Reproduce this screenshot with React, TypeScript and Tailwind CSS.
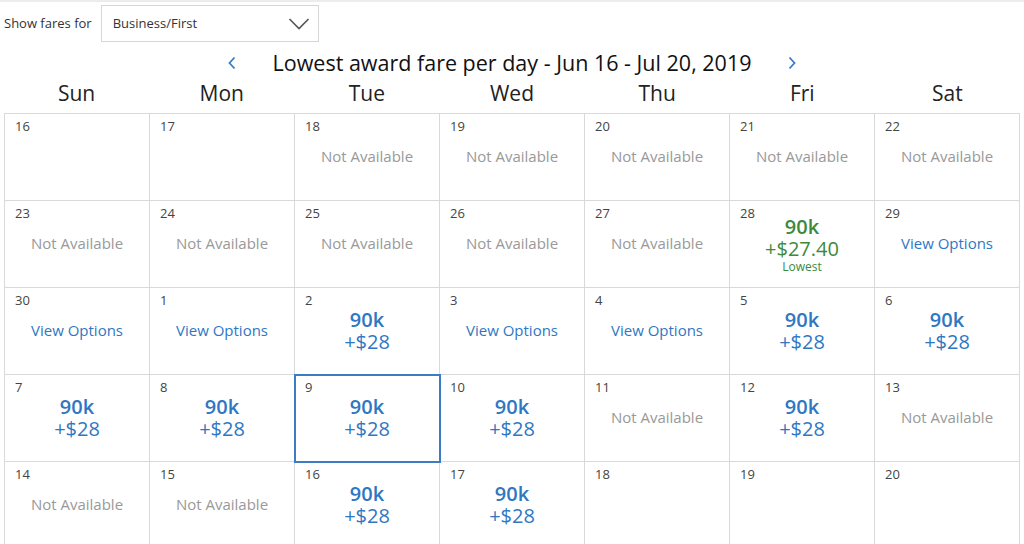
type Cell =
  | { d: number; t: 'empty' }
  | { d: number; t: 'na' }
  | { d: number; t: 'view' }
  | { d: number; t: 'fare'; sel?: boolean }
  | { d: number; t: 'low' }

const DAYS = ['Sun', 'Mon', 'Tue', 'Wed', 'Thu', 'Fri', 'Sat']

const CELLS: Cell[] = [
  { d: 16, t: 'empty' }, { d: 17, t: 'empty' }, { d: 18, t: 'na' }, { d: 19, t: 'na' }, { d: 20, t: 'na' }, { d: 21, t: 'na' }, { d: 22, t: 'na' },
  { d: 23, t: 'na' }, { d: 24, t: 'na' }, { d: 25, t: 'na' }, { d: 26, t: 'na' }, { d: 27, t: 'na' }, { d: 28, t: 'low' }, { d: 29, t: 'view' },
  { d: 30, t: 'view' }, { d: 1, t: 'view' }, { d: 2, t: 'fare' }, { d: 3, t: 'view' }, { d: 4, t: 'view' }, { d: 5, t: 'fare' }, { d: 6, t: 'fare' },
  { d: 7, t: 'fare' }, { d: 8, t: 'fare' }, { d: 9, t: 'fare', sel: true }, { d: 10, t: 'fare' }, { d: 11, t: 'na' }, { d: 12, t: 'fare' }, { d: 13, t: 'na' },
  { d: 14, t: 'na' }, { d: 15, t: 'na' }, { d: 16, t: 'fare' }, { d: 17, t: 'fare' }, { d: 18, t: 'empty' }, { d: 19, t: 'empty' }, { d: 20, t: 'empty' },
]

function Chevron({ dir }: { dir: 'left' | 'right' }) {
  return (
    <svg width="10" height="14" viewBox="0 0 10 14" fill="none" stroke="#3a7dc9" strokeWidth="1.8">
      {dir === 'left' ? <path d="M7.5 1.5 L2.5 7 L7.5 12.5" /> : <path d="M2.5 1.5 L7.5 7 L2.5 12.5" />}
    </svg>
  )
}

function DayCell({ cell }: { cell: Cell }) {
  const sel = cell.t === 'fare' && cell.sel
  return (
    <div
      className={`h-[87px] border-r border-b border-[#d9d9d9] flex flex-col ${
        sel ? 'relative z-10 outline-2 -outline-offset-1 outline-[#3b7cc4]' : ''
      }`}
    >
      <div className="pl-[10px] pt-[3px] text-[13px] leading-[18px] text-[#444]">{cell.d}</div>
      {cell.t === 'na' && (
        <div className="mt-[11px] text-center text-[15px] leading-[20px] text-[#999]">Not Available</div>
      )}
      {cell.t === 'view' && (
        <div className="mt-[11px] text-center text-[15px] leading-[20px] text-[#2f77c2]">View Options</div>
      )}
      {cell.t === 'fare' && (
        <div className="text-center text-[#2f77c2] text-[20px] leading-[22px]">
          <div className="font-semibold">90k</div>
          <div>+$28</div>
        </div>
      )}
      {cell.t === 'low' && (
        <div className="-mt-[6px] text-center text-[#3d8a3a]">
          <div className="font-semibold text-[20px] leading-[22px]">90k</div>
          <div className="text-[20px] leading-[22px]">+$27.40</div>
          <div className="text-[12px] leading-[14px]">Lowest</div>
        </div>
      )}
    </div>
  )
}

export default function App() {
  return (
    <div
      className="w-[1024px] h-[544px] overflow-hidden bg-white border-t-2 border-[#ececec] text-[#222]"
      style={{ fontFamily: '"Open Sans", "Liberation Sans", sans-serif' }}
    >
      <div className="flex items-center gap-[9px] pl-[4px] mt-[3px]">
        <span className="text-[13px] text-[#333]">Show fares for</span>
        <div className="w-[218px] h-[37px] border border-[#d6d6d6] flex items-center justify-between pl-[11px] pr-[8px]">
          <span className="text-[13px] text-[#333]">Business/First</span>
          <svg width="22" height="14" viewBox="0 0 22 14" fill="none" stroke="#555" strokeWidth="1.6">
            <path d="M1.5 2 L11 11.5 L20.5 2" />
          </svg>
        </div>
      </div>

      <div className="mt-[8px] h-[26px] flex items-center justify-center gap-[36px]">
        <Chevron dir="left" />
        <span className="text-[21.5px] leading-[26px] text-[#111]">Lowest award fare per day - Jun 16 - Jul 20, 2019</span>
        <Chevron dir="right" />
      </div>

      <div className="mx-[4px] grid grid-cols-7 h-[37px] pb-[3px] items-center">
        {DAYS.map((d) => (
          <div key={d} className="text-center text-[21px] leading-[26px] text-[#222]">
            {d}
          </div>
        ))}
      </div>

      <div className="mx-[4px] w-[1016px] grid grid-cols-7 border-l border-t border-[#d9d9d9]">
        {CELLS.map((c, i) => (
          <DayCell key={i} cell={c} />
        ))}
      </div>
    </div>
  )
}
